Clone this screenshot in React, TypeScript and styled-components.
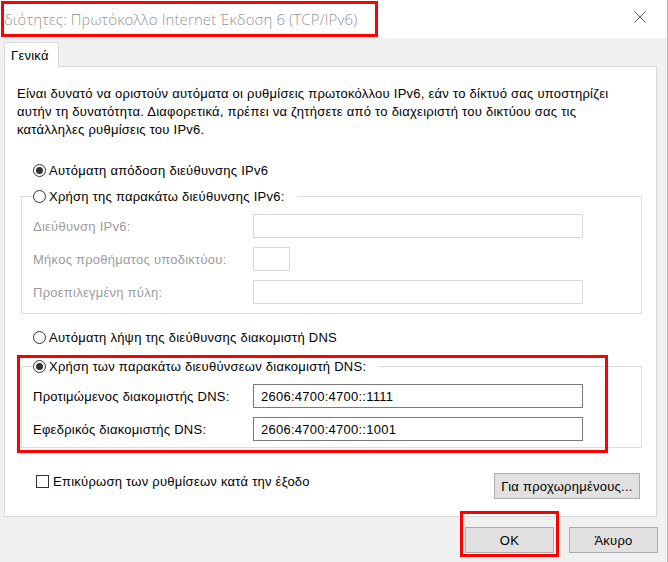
import React from 'react';
import styled, {createGlobalStyle} from 'styled-components';

const GlobalStyle = createGlobalStyle`
  html, body {
    margin: 0;
    padding: 0;
    background: #f0f0f0;
  }
  * {
    box-sizing: border-box;
  }
`;

const Window = styled.div`
  width: 668px;
  height: 562px;
  display: flex;
  flex-direction: column;
  background: #f0f0f0;
  border-right: 1px solid #b4b4b4;
  font-family: "Liberation Sans", Arial, sans-serif;
  font-size: 13px;
  letter-spacing: 0.25px;
  color: #000;
  overflow: hidden;
`;

const TitleBar = styled.div`
  height: 38px;
  flex: none;
  background: #fff;
  display: flex;
  align-items: flex-start;
  justify-content: space-between;
  padding: 1px 0 0 1px;
`;

const TitleMark = styled.div`
  width: 377px;
  height: 36px;
  border: 3px solid #f00;
  display: flex;
  align-items: center;
  font-family: "Open Sans", "Noto Sans", sans-serif;
  font-size: 15px;
  font-weight: 300;
  letter-spacing: 0.1px;
  color: #939393;
  white-space: nowrap;
  overflow: hidden;
`;

const CloseButton = styled.div`
  width: 46px;
  height: 32px;
  margin-right: 4px;
  display: flex;
  align-items: center;
  justify-content: center;
`;

const Body = styled.div`
  flex: 1;
  display: flex;
  flex-direction: column;
  padding: 4px 10px 0 4px;
`;

const TabStrip = styled.div`
  display: flex;
`;

const Tab = styled.div`
  position: relative;
  z-index: 1;
  width: 55px;
  height: 25px;
  margin-bottom: -1px;
  padding-left: 6px;
  display: flex;
  align-items: center;
  background: #fff;
  border: 1px solid #d9d9d9;
  border-bottom: none;
`;

const Panel = styled.div`
  height: 451px;
  background: #fff;
  border: 1px solid #d9d9d9;
  display: flex;
  flex-direction: column;
`;

const Description = styled.p`
  margin: 18px 0 0 12px;
  line-height: 18px;
  white-space: nowrap;
`;

const OptionRow = styled.div<{ $top: number }>`
  height: 20px;
  margin: ${p => p.$top}px 0 0 28px;
  display: flex;
  align-items: center;
  gap: 3px;
  white-space: nowrap;
`;

const RadioDot = styled.span<{ $on?: boolean }>`
  width: 13px;
  height: 13px;
  flex: none;
  border-radius: 50%;
  border: 1px solid #333;
  background: #fff;
  display: flex;
  align-items: center;
  justify-content: center;

  &::after {
    content: '';
    width: 7px;
    height: 7px;
    border-radius: 50%;
    background: #333;
    display: ${p => (p.$on ? 'block' : 'none')};
  }
`;

const CheckBox = styled.span`
  width: 13px;
  height: 13px;
  flex: none;
  border: 1px solid #333;
  background: #fff;
`;

const Section = styled.div<{ $top: number }>`
  position: relative;
  margin: ${p => p.$top}px 0 0 16px;
  width: 621px;
`;

const GroupBox = styled.fieldset<{ $bottom: number }>`
  margin: 0;
  min-inline-size: 0;
  border: 1px solid #dcdcdc;
  padding: 8px 0 ${p => p.$bottom}px 11px;
`;

const GroupLegend = styled.legend`
  padding: 0 12px 0 0;
  height: 20px;
  display: flex;
  align-items: center;
  gap: 3px;
  background: #fff;
  white-space: nowrap;
`;

const FieldGrid = styled.div`
  display: grid;
  grid-template-columns: 220px auto;
  row-gap: 9px;
  align-items: center;
`;

const FieldLabel = styled.span<{ $off?: boolean }>`
  color: ${p => (p.$off ? '#9b9b9b' : '#000')};
  white-space: nowrap;
`;

const Field = styled.div<{ $w: number; $off?: boolean }>`
  width: ${p => p.$w}px;
  height: 24px;
  border: 1px solid ${p => (p.$off ? '#d9d9d9' : '#7a7a7a')};
  background: #fff;
  padding-left: 7px;
  display: flex;
  align-items: center;
`;

const Annotation = styled.div<{ $l: number; $t: number; $w: number; $h: number }>`
  position: absolute;
  left: ${p => p.$l}px;
  top: ${p => p.$t}px;
  width: ${p => p.$w}px;
  height: ${p => p.$h}px;
  border: 3px solid #f00;
  pointer-events: none;
`;

const BottomRow = styled.div`
  margin: 25px 16px 0 31px;
  display: flex;
  justify-content: space-between;
  align-items: flex-start;
`;

const CheckRow = styled.label`
  display: flex;
  align-items: center;
  gap: 4px;
  height: 16px;
`;

const Button = styled.button<{ $w: number }>`
  width: ${p => p.$w}px;
  height: 26px;
  background: #e1e1e1;
  border: 1px solid #adadad;
  font-family: "Liberation Sans", Arial, sans-serif;
  font-size: 13px;
  letter-spacing: 0.25px;
  color: #000;
  padding: 0;
`;

const Footer = styled.div`
  display: flex;
  justify-content: flex-end;
  gap: 15px;
  padding: 10px 0 0 0;
  margin-right: -1px;
`;

const ButtonSlot = styled.div`
  position: relative;
  display: flex;
`;

const CloseIcon = () => (
  <svg width="12" height="12" viewBox="0 0 12 12">
    <path d="M0.5 0.5 L11.5 11.5 M11.5 0.5 L0.5 11.5" stroke="#666" strokeWidth="1" fill="none"/>
  </svg>
);

export default function App() {
  return (
    <>
      <GlobalStyle/>
      <Window>
        <TitleBar>
          <TitleMark>διότητες: Πρωτόκολλο Internet Έκδοση 6 (TCP/IPv6)</TitleMark>
          <CloseButton><CloseIcon/></CloseButton>
        </TitleBar>
        <Body>
          <TabStrip>
            <Tab>Γενικά</Tab>
          </TabStrip>
          <Panel>
            <Description>
              Είναι δυνατό να οριστούν αυτόματα οι ρυθμίσεις πρωτοκόλλου IPv6, εάν το δίκτυό σας υποστηρίζει<br/>
              αυτήν τη δυνατότητα. Διαφορετικά, πρέπει να ζητήσετε από το διαχειριστή του δικτύου σας τις<br/>
              κατάλληλες ρυθμίσεις του IPv6.
            </Description>

            <OptionRow $top={21}>
              <RadioDot $on/>
              <span>Αυτόματη απόδοση διεύθυνσης IPv6</span>
            </OptionRow>

            <Section $top={6}>
              <GroupBox $bottom={9}>
                <GroupLegend>
                  <RadioDot/>
                  <span>Χρήση της παρακάτω διεύθυνσης IPv6:</span>
                </GroupLegend>
                <FieldGrid>
                  <FieldLabel $off>Διεύθυνση IPv6:</FieldLabel>
                  <Field $w={330} $off/>
                  <FieldLabel $off>Μήκος προθήματος υποδικτύου:</FieldLabel>
                  <Field $w={37} $off/>
                  <FieldLabel $off>Προεπιλεγμένη πύλη:</FieldLabel>
                  <Field $w={330} $off/>
                </FieldGrid>
              </GroupBox>
            </Section>

            <OptionRow $top={13}>
              <RadioDot/>
              <span>Αυτόματη λήψη της διεύθυνσης διακομιστή DNS</span>
            </OptionRow>

            <Section $top={9}>
              <GroupBox $bottom={6}>
                <GroupLegend>
                  <RadioDot $on/>
                  <span>Χρήση των παρακάτω διευθύνσεων διακομιστή DNS:</span>
                </GroupLegend>
                <FieldGrid>
                  <FieldLabel>Προτιμώμενος διακομιστής DNS:</FieldLabel>
                  <Field $w={330}>2606:4700:4700::1111</Field>
                  <FieldLabel>Εφεδρικός διακομιστής DNS:</FieldLabel>
                  <Field $w={330}>2606:4700:4700::1001</Field>
                </FieldGrid>
              </GroupBox>
              <Annotation $l={-4} $t={-1} $w={591} $h={98}/>
            </Section>

            <BottomRow>
              <CheckRow>
                <CheckBox/>
                <span>Επικύρωση των ρυθμίσεων κατά την έξοδο</span>
              </CheckRow>
              <Button $w={146}>Για προχωρημένους...</Button>
            </BottomRow>
          </Panel>

          <Footer>
            <ButtonSlot>
              <Button $w={89}>OK</Button>
              <Annotation $l={-5} $t={-16} $w={99} $h={46}/>
            </ButtonSlot>
            <Button $w={89}>Άκυρο</Button>
          </Footer>
        </Body>
      </Window>
    </>
  );
}
